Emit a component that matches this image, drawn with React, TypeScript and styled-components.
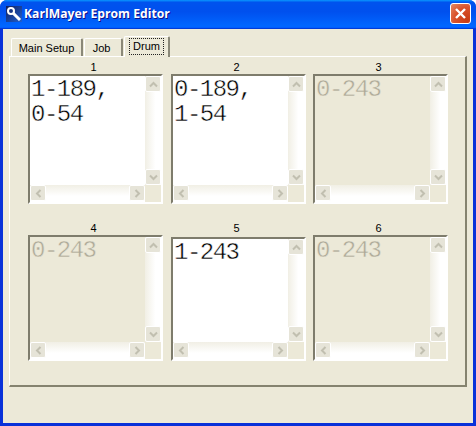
import React from "react";
import styled, { createGlobalStyle } from "styled-components";

const Global = createGlobalStyle`
  html, body { margin: 0; padding: 0; background: #fff; }
  * { box-sizing: border-box; }
`;

const Window = styled.div`
  width: 476px;
  height: 426px;
  display: flex;
  flex-direction: column;
  overflow: hidden;
  border-radius: 7px 7px 0 0;
  background: #0831d9;
  font-family: "Liberation Sans", sans-serif;
`;

const TitleBar = styled.div`
  height: 29px;
  flex: none;
  display: flex;
  align-items: center;
  padding: 0 5px 2px 6px;
  background: linear-gradient(180deg, #0997ff 0, #0053ee 8%, #0050ee 40%, #0066ff 88%, #0066ff 93%, #005bff 95%, #003dd7 96%, #003dd7 100%);
`;

const AppIcon = styled.svg`
  width: 16px;
  height: 16px;
  flex: none;
  margin-right: 2px;
`;

const Title = styled.div`
  flex: 1;
  color: #fff;
  font: bold 12.2px "Open Sans", sans-serif;
  white-space: nowrap;
  text-shadow: 1px 1px 0 #0f1089;
`;

const CloseButton = styled.div`
  width: 21px;
  height: 21px;
  border: 1px solid #fff;
  border-radius: 3px;
  display: flex;
  align-items: center;
  justify-content: center;
  background: radial-gradient(circle at 85% 85%, #c83c14 0, #d9512b 55%, #e58a64 100%);
`;

const Client = styled.div`
  flex: 1;
  margin: 0 3px 3px;
  background: #ece9d8;
  display: flex;
  flex-direction: column;
`;

const TabStrip = styled.div`
  height: 27px;
  flex: none;
  display: flex;
  align-items: flex-end;
  padding-left: 8px;
  position: relative;
  z-index: 1;
`;

const Tab = styled.div<{ $active?: boolean; $width: number; $gap?: number; $nudge?: number }>`
  width: ${(p) => p.$width}px;
  height: ${(p) => (p.$active ? 21 : 18)}px;
  margin-right: ${(p) => p.$gap ?? 1}px;
  margin-bottom: ${(p) => (p.$active ? -1 : 0)}px;
  border: 1px solid #fff;
  border-bottom: 0;
  border-right: 2px solid #8a8878;
  border-radius: 2px 2px 0 0;
  background: #ece9d8;
  display: flex;
  align-items: ${(p) => (p.$active ? "flex-start" : "center")};
  justify-content: center;
  padding-top: ${(p) => (p.$active ? 2 : 1)}px;
  padding-right: ${(p) => p.$nudge ?? 0}px;
  font-size: 11px;
  color: #000;
`;

const Focus = styled.span`
  outline: 1px dotted #222;
  padding: 1px 3px;
  line-height: 13px;
`;

const Panel = styled.div`
  height: 331px;
  margin: 0 6px;
  border-top: 1px solid #fff;
  border-left: 1px solid #fff;
  border-right: 2px solid #85836f;
  border-bottom: 2px solid #85836f;
  padding: 3px 0 0 18px;
  display: grid;
  grid-template-columns: 143px 142px 135px;
  grid-template-rows: 161px 140px;
`;

const Cell = styled.div`
  width: 135px;
  display: flex;
  flex-direction: column;
`;

const Label = styled.div`
  height: 14px;
  padding-right: 4px;
  text-align: center;
  font-size: 11px;
  line-height: 14px;
  color: #000;
`;

const Box = styled.div<{ $drop?: number }>`
  width: 135px;
  height: 130px;
  margin-top: ${(p) => p.$drop ?? 0}px;
  border-top: 2px solid #7e7c6c;
  border-left: 2px solid #7e7c6c;
  border-right: 2px solid #fff;
  border-bottom: 2px solid #fff;
  display: grid;
  grid-template-columns: 1fr 16px;
  grid-template-rows: 1fr 17px;
`;

const Text = styled.div<{ $disabled?: boolean }>`
  background: ${(p) => (p.$disabled ? "#ece9d8" : "#fff")};
  color: ${(p) => (p.$disabled ? "#aca899" : "#000")};
  -webkit-text-stroke: 0.45px ${(p) => (p.$disabled ? "#ece9d8" : "#fff")};
  font: 24px/25px "Liberation Mono", monospace;
  letter-spacing: -1.5px;
  padding: 1px 0 0 1px;
  white-space: pre;
  overflow: hidden;
`;

const VTrack = styled.div`
  display: flex;
  flex-direction: column;
  justify-content: space-between;
  background: linear-gradient(90deg, #f1efe5 0, #fff 65%, #fff 100%);
`;

const HTrack = styled.div`
  display: flex;
  justify-content: space-between;
  background: linear-gradient(180deg, #f1efe5 0, #fff 65%, #fff 100%);
`;

const Corner = styled.div`
  background: #ece9d8;
`;

const ScrollBtn = styled.div`
  width: 16px;
  height: 16px;
  flex: none;
  border: 1px solid #fff;
  border-radius: 2px;
  background: #e6e4d8;
  display: flex;
  align-items: center;
  justify-content: center;
`;

const Chevron = styled.svg`
  width: 9px;
  height: 9px;
  fill: none;
  stroke: #c1bfb0;
  stroke-width: 2;
`;

const arrows = {
  up: "1,6.5 4.5,3 8,6.5",
  down: "1,2.5 4.5,6 8,2.5",
  left: "6.5,1 3,4.5 6.5,8",
  right: "2.5,1 6,4.5 2.5,8",
};

const Btn = ({ dir }: { dir: keyof typeof arrows }) => (
  <ScrollBtn>
    <Chevron viewBox="0 0 9 9">
      <polyline points={arrows[dir]} />
    </Chevron>
  </ScrollBtn>
);

const Drum = ({ n, text, disabled, drop }: { n: number; text: string; disabled?: boolean; drop?: number }) => (
  <Cell>
    <Label>{n}</Label>
    <Box $drop={drop}>
      <Text $disabled={disabled}>{text}</Text>
      <VTrack>
        <Btn dir="up" />
        <Btn dir="down" />
      </VTrack>
      <HTrack>
        <Btn dir="left" />
        <Btn dir="right" />
      </HTrack>
      <Corner />
    </Box>
  </Cell>
);

export default function App() {
  return (
    <Window>
      <Global />
      <TitleBar>
        <AppIcon viewBox="0 0 16 16">
          <defs>
            <linearGradient id="iconBg" x1="0" y1="0" x2="1" y2="1">
              <stop offset="0" stopColor="#12205c" />
              <stop offset="1" stopColor="#1f5fd0" />
            </linearGradient>
          </defs>
          <rect x="0" y="0" width="16" height="16" fill="url(#iconBg)" />
          <circle cx="5" cy="5" r="3" fill="none" stroke="#fff" strokeWidth="2" />
          <path d="M7 7 L14 14" stroke="#fff" strokeWidth="3" />
        </AppIcon>
        <Title>KarlMayer Eprom Editor</Title>
        <CloseButton>
          <svg width="13" height="13" viewBox="0 0 13 13">
            <path d="M2 2 L11 11 M11 2 L2 11" stroke="#fff" strokeWidth="2.4" />
          </svg>
        </CloseButton>
      </TitleBar>
      <Client>
        <TabStrip>
          <Tab $width={72}>Main Setup</Tab>
          <Tab $width={39} $nudge={3}>Job</Tab>
          <Tab $width={46} $active>
            <Focus>Drum</Focus>
          </Tab>
        </TabStrip>
        <Panel>
          <Drum n={1} text={"1-189,\n0-54"} />
          <Drum n={2} text={"0-189,\n1-54"} />
          <Drum n={3} text="0-243" disabled />
          <Drum n={4} text="0-243" disabled />
          <Drum n={5} text="1-243" drop={2} />
          <Drum n={6} text="0-243" disabled />
        </Panel>
      </Client>
    </Window>
  );
}
